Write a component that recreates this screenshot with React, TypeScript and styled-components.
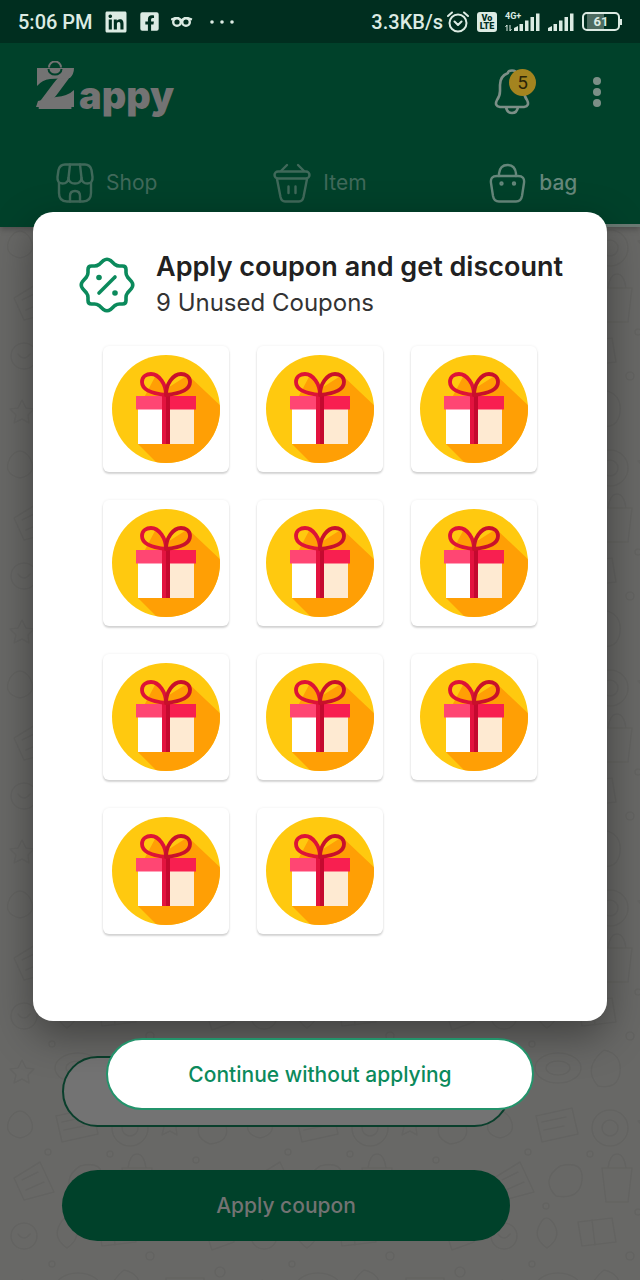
import React from 'react';
import styled, { createGlobalStyle, css } from 'styled-components';
import { FaLinkedin, FaFacebookSquare } from 'react-icons/fa';

const color = {
  green: '#0b8a5c',
  header: '#00412a',
  status: '#002e1f',
  statusInk: '#dcebe3',
  dimInk: '#737373',
  dimTab: '#40695a',
  dimTabActive: '#66877b',
  page: '#686866',
  ink: '#212121',
};

const uiFont = `Inter, 'Open Sans', sans-serif`;
const systemFont = `Roboto, 'Liberation Sans', sans-serif`;

const GlobalStyle = createGlobalStyle`
  *, *::before, *::after { box-sizing: border-box; }
  body { margin: 0; background: ${color.page}; font-family: ${uiFont}; }
  button, input { font: inherit; }
  svg { display: block; flex: none; }
`;

const Screen = styled.div`
  position: relative;
  min-height: 100vh;
  display: flex;
  flex-direction: column;
  background: ${color.page};
  overflow: hidden;
`;

/* Status bar */

const StatusBar = styled.div`
  display: flex;
  align-items: center;
  justify-content: space-between;
  height: 43px;
  padding: 0 20px 0 18px;
  background: ${color.status};
  color: ${color.statusInk};
  font: 500 20px/24px ${systemFont};
  white-space: nowrap;
`;

const StatusGroup = styled.div<{ $gap: number }>`
  display: flex;
  align-items: center;
  gap: ${(p) => p.$gap}px;
`;

const VolteBadge = styled.span`
  display: flex;
  flex-direction: column;
  align-items: center;
  justify-content: center;
  width: 20px;
  height: 20px;
  border-radius: 3px;
  background: ${color.statusInk};
  color: ${color.status};
  font: 900 9px/8px ${systemFont};
`;

const Signal = styled.span`
  position: relative;
  display: block;
`;

const NetworkTag = styled.span`
  position: absolute;
  left: 0;
  top: 0;
  font: 700 9px/8px ${systemFont};
`;

const Battery = styled.span`
  position: relative;
  display: flex;
  align-items: center;
  justify-content: center;
  width: 38px;
  height: 19px;
  border: 2px solid ${color.statusInk};
  border-radius: 5px;
  background: linear-gradient(90deg, transparent 3px, #4d6b60 3px, #4d6b60 20px, transparent 20px);
  font: 700 13px/15px ${systemFont};

  &::after {
    content: '';
    position: absolute;
    right: -4px;
    top: 5px;
    width: 2px;
    height: 6px;
    background: ${color.statusInk};
  }
`;

/* App header */

const Header = styled.header`
  position: relative;
  background: ${color.header};
  box-shadow: 0 2px 6px rgba(0, 0, 0, 0.25);
`;

const TopRow = styled.div`
  display: flex;
  align-items: center;
  justify-content: space-between;
  height: 98px;
  padding: 0 32px 0 36px;
`;

const Logo = styled.h1`
  position: relative;
  display: flex;
  align-items: baseline;
  margin: 0;
  color: ${color.dimInk};
  font-weight: 900;
  font-size: 38px;
  line-height: 60px;
`;

const LogoInitial = styled.span`
  width: 43px;
  font-size: 55px;
`;

const LogoBag = styled.svg`
  position: absolute;
  left: 0;
  top: 2px;
`;

const HeaderActions = styled.div`
  display: flex;
  align-items: center;
  gap: 48px;
`;

const IconButton = styled.button`
  position: relative;
  display: flex;
  padding: 0;
  border: 0;
  background: none;
`;

const Count = styled.span`
  position: absolute;
  right: -6px;
  top: 0;
  width: 27px;
  height: 27px;
  border-radius: 50%;
  background: #a4841f;
  color: #2b2408;
  font: 400 19px/27px ${systemFont};
  text-align: center;
`;

const Tabs = styled.nav`
  display: grid;
  grid-template-columns: repeat(3, 1fr);
`;

const Tab = styled.a<{ $active?: boolean }>`
  display: flex;
  align-items: center;
  justify-content: center;
  gap: 12px;
  height: 86px;
  border-bottom: 3px solid ${(p) => (p.$active ? '#6b7a74' : 'transparent')};
  color: ${(p) => (p.$active ? color.dimTabActive : color.dimTab)};
  font-size: 21px;
  font-weight: ${(p) => (p.$active ? 500 : 400)};
  line-height: 28px;
  text-decoration: none;
`;

/* Page behind the dialog */

const Doodles = styled.svg`
  position: absolute;
  inset: 0;
  width: 100%;
  height: 100%;
`;

const Main = styled.main`
  position: relative;
  flex: 1;
  display: flex;
  flex-direction: column;
  justify-content: flex-end;
  gap: 43px;
  padding: 829px 130px 39px 62px;
`;

const pill = css`
  display: block;
  border-radius: 36px;
  text-align: center;
  font-size: 21px;
  font-weight: 500;
  padding: 0;
`;

const CodeInput = styled.input`
  ${pill}
  width: 100%;
  height: 71px;
  border: 2px solid #0a3f2c;
  background: ${color.dimInk};
`;

const ApplyButton = styled.button`
  ${pill}
  width: 100%;
  height: 71px;
  border: 0;
  background: ${color.header};
  color: ${color.dimInk};
`;

/* Coupon dialog */

const Overlay = styled.div`
  position: absolute;
  inset: 0;
  padding: 212px 33px 0;
`;

const Dialog = styled.section`
  min-height: 809px;
  padding: 40px 38px 87px 46px;
  border-radius: 20px;
  background: #fff;
  box-shadow: 0 14px 40px rgba(0, 0, 0, 0.38);
`;

const DialogHead = styled.div`
  display: flex;
  align-items: center;
  gap: 21px;
  height: 66px;
`;

const Title = styled.h2`
  margin: 0;
  color: ${color.ink};
  font-size: 27px;
  font-weight: 600;
  line-height: 36px;
  white-space: nowrap;
`;

const Subtitle = styled.p`
  margin: 0;
  color: #333;
  font-size: 24px;
  line-height: 36px;
`;

const CouponGrid = styled.div`
  display: grid;
  grid-template-columns: repeat(auto-fill, 126px);
  gap: 28px;
  margin: 28px 24px 0;
`;

const CouponCard = styled.button`
  display: flex;
  align-items: center;
  justify-content: center;
  height: 126px;
  padding: 0;
  border: 0;
  border-radius: 6px;
  background: #fff;
  box-shadow: 0 2px 2px rgba(0, 0, 0, 0.16), 0 0 3px rgba(0, 0, 0, 0.07);
`;

const ContinueButton = styled.button`
  ${pill}
  width: calc(100% - 146px);
  height: 72px;
  margin: 17px auto 0;
  border: 2px solid #23936b;
  background: #fff;
  color: ${color.green};
`;

function Gift() {
  return (
    <svg width="108" height="108" viewBox="0 0 108 108" aria-hidden="true">
      <defs>
        <clipPath id="disc">
          <circle cx="54" cy="54" r="54" />
        </clipPath>
      </defs>
      <g clipPath="url(#disc)">
        <rect width="108" height="108" fill="#ffc90f" />
        <path d="M44 20 54 34 76 20 112 54V112H49L26 89V54Z" fill="#ff9f05" />
      </g>
      <path d="M26 54H54V89H26Z" fill="#fff" />
      <path d="M54 54H82V89H54Z" fill="#feead2" />
      <path d="M24 41H54V54.500H24Z" fill="#ff4673" />
      <path d="M54 41H84V54.500H54Z" fill="#f81f50" />
      <path d="M50 41H54V89H50Z" fill="#e3133f" />
      <path d="M54 41H58V89H54Z" fill="#c4092f" />
      <g fill="none" strokeWidth="3.800" strokeLinejoin="round">
        <path d="M54 40C44 39 30 36 30 27C30 21 35 19 39 19C47 19 54 29 54 40Z" stroke="#dd1237" />
        <path d="M54 40C64 39 78 36 78 27C78 21 73 19 69 19C61 19 54 29 54 40Z" stroke="#c8102b" />
      </g>
    </svg>
  );
}

function PercentBadge() {
  return (
    <svg width="56" height="56" viewBox="0 0 56 56" fill="none" stroke={color.green} strokeWidth="3.600" strokeLinecap="round" aria-hidden="true">
      <path d="M24.500 3.500Q28 1 31.500 3.500L36 7.500Q38 9 40.500 9H43.500Q47 9 47 12.500V15.500Q47 18 48.500 20L52.500 24.500Q55 28 52.500 31.500L48.500 36Q47 38 47 40.500V43.500Q47 47 43.500 47H40.500Q38 47 36 48.500L31.500 52.500Q28 55 24.500 52.500L20 48.500Q18 47 15.500 47H12.500Q9 47 9 43.500V40.500Q9 38 7.500 36L3.500 31.500Q1 28 3.500 24.500L7.500 20Q9 18 9 15.500V12.500Q9 9 12.500 9H15.500Q18 9 20 7.500Z" />
      <path d="M20 36 36 20" />
      <circle cx="20" cy="20.500" r="2.800" fill={color.green} stroke="none" />
      <circle cx="36" cy="36" r="2.800" fill={color.green} stroke="none" />
    </svg>
  );
}

const tabIcon = {
  width: 38,
  height: 40,
  viewBox: '0 0 38 40',
  fill: 'none',
  stroke: 'currentColor',
  strokeWidth: 2.4,
  strokeLinecap: 'round' as const,
  strokeLinejoin: 'round' as const,
  'aria-hidden': true,
};

function ShopIcon() {
  return (
    <svg {...tabIcon}>
      <path d="M9 1.500H29Q34 1.500 35.500 7L36.500 14Q37 20.500 31.500 20.500Q26 20.500 25.500 15Q25 20.500 19 20.500Q13 20.500 12.500 15Q12 20.500 6.500 20.500Q1 20.500 1.500 14L2.500 7Q4 1.500 9 1.500Z" />
      <path d="M14 1.500 12.500 15M24 1.500 25.500 15M3 20V30Q3 38.500 11 38.500H27Q35 38.500 35 30V20" />
      <path d="M14 38.500V33Q14 28 19 28Q24 28 24 33V38.500" />
    </svg>
  );
}

function BasketIcon() {
  return (
    <svg {...tabIcon}>
      <rect x="1.500" y="8.500" width="35" height="7" rx="3.500" />
      <path d="M14 2 8 8M25 2 31 8M4 16 7.500 34Q8.500 38.500 12 38.500H26Q29.500 38.500 30.500 34L34 16M15.500 23.500V30M22.500 23.500V30" />
    </svg>
  );
}

function BagIcon() {
  return (
    <svg {...tabIcon}>
      <path d="M10 13V10.500Q11 2 18.500 2Q26 2 27 10.500V13" />
      <path d="M8 13H29Q36 13 35 20L33 33Q32 38.500 27 38.500H10Q5 38.500 4 33L2 20Q1 13 8 13Z" />
      <circle cx="12.500" cy="20.500" r="1" />
      <circle cx="25" cy="20.500" r="1" />
    </svg>
  );
}

function Backdrop() {
  return (
    <Doodles aria-hidden="true">
      <defs>
        <pattern id="doodle" width="240" height="220" patternUnits="userSpaceOnUse">
          <g fill="none" stroke="#636361" strokeWidth="1.600" strokeLinejoin="round" strokeLinecap="round">
            <path d="M10 18q10-14 20 0q8 16-10 20q-18-4-10-20Z" />
            <path d="M56 16l36-8 6 26-36 8ZM62 22l24-5M64 30l20-4" />
            <circle cx="130" cy="28" r="18" />
            <circle cx="130" cy="28" r="8" />
            <path d="M170 12l4 8 8 1-6 6 1 8-7-4-8 4 2-8-6-6 8-1Z" />
            <path d="M204 18q18-8 22 8t-16 18q-20-8-6-26Z" />
            <path d="M14 78l26-16 14 30-30 8ZM22 80l16-8M26 90l18-8" />
            <path d="M80 66q24-6 22 14t-26 16q-16-16 4-30Z" />
            <path d="M122 68h30l-4 34h-22ZM128 68q2-14 9-14t9 14" />
            <path d="M178 72l34 10-6 22-34-10ZM184 80l22 6" />
            <circle cx="24" cy="136" r="13" />
            <path d="M18 134q6 8 12 0M60 124q6-12 14 0q8 14-7 24q-15-10-7-24Z" />
            <path d="M98 122l34-4 4 24-34 4ZM112 120l3 25" />
            <path d="M166 124a12 12 0 0 1 24 0v16h-24ZM204 126l22-8 8 24-22 8Z" />
            <path d="M22 180l4 8 8 1-6 6 1 8-7-4-8 4 2-8-6-6 8-1Z" />
            <ellipse cx="78" cy="188" rx="23" ry="15" />
            <ellipse cx="78" cy="188" rx="12" ry="7" />
            <path d="M124 170q18 4 16 22t-22 14q-16-18 6-36ZM166 178h38v24h-38ZM172 184h24" />
            <circle cx="48" cy="52" r="3" />
            <circle cx="110" cy="54" r="3" />
            <circle cx="196" cy="60" r="3" />
            <circle cx="66" cy="106" r="3" />
            <circle cx="158" cy="112" r="3" />
            <circle cx="150" cy="156" r="4" />
            <circle cx="52" cy="164" r="3" />
            <circle cx="220" cy="172" r="5" />
          </g>
        </pattern>
      </defs>
      <rect width="100%" height="100%" fill="url(#doodle)" />
    </Doodles>
  );
}

const coupons = Array.from({ length: 11 }, (_, i) => i + 1);

export default function App() {
  return (
    <Screen>
      <GlobalStyle />
      <Backdrop />
      <Header>
        <StatusBar>
          <StatusGroup $gap={11}>
            <span>5:06 PM</span>
            <FaLinkedin size={24} aria-label="LinkedIn" />
            <FaFacebookSquare size={21} aria-label="Facebook" />
            <svg width="64" height="20" viewBox="0 0 64 20" fill="none" stroke={color.statusInk} strokeWidth="2.400">
              <circle cx="6" cy="10" r="3.800" />
              <circle cx="15" cy="10" r="3.800" />
              <path d="M0 7.500 4 6H7L10.500 8 14 6H17L21 7.500" strokeWidth="2" />
              <g fill={color.statusInk} stroke="none">
                <circle cx="41" cy="10" r="1.800" />
                <circle cx="51" cy="10" r="1.800" />
                <circle cx="61" cy="10" r="1.800" />
              </g>
            </svg>
          </StatusGroup>
          <StatusGroup $gap={8}>
            <StatusGroup $gap={4}>
              <span>3.3KB/s</span>
              <svg width="22" height="22" viewBox="0 0 22 22" fill="none" stroke={color.statusInk} strokeWidth="2" strokeLinecap="round" strokeLinejoin="round">
                <circle cx="11" cy="12" r="8.500" />
                <path d="M7.500 10.500 11 14 14.500 10.500M1 5 5 1.500M21 5 17 1.500" />
              </svg>
            </StatusGroup>
            <VolteBadge>
              <span>Vo</span>
              <span>LTE</span>
            </VolteBadge>
            <Signal>
              <NetworkTag>4G+</NetworkTag>
              <svg width="35" height="20" viewBox="0 0 35 20">
                <path d="M2 19V13M.5 15 2 13M5 13V19M6.500 17 5 19" stroke={color.statusInk} fill="none" />
                <path d="M9 19v-3l4-2v5ZM14.500 19v-7h3.500v7ZM20 19V8.500h3.500V19ZM25.500 19V5H29v14ZM31 19V1.500h3.500V19Z" fill={color.statusInk} />
              </svg>
            </Signal>
            <svg width="26" height="20" viewBox="0 0 26 20">
              <path d="M0 19v-3l4-2v5ZM5.500 19v-7H9v7ZM11 19V8.500h3.500V19ZM16.500 19V5H20v14ZM22 19V1.500h3.500V19Z" fill={color.statusInk} />
            </svg>
            <Battery>61</Battery>
          </StatusGroup>
        </StatusBar>
        <TopRow>
          <Logo>
            <LogoBag width="39" height="46" viewBox="0 0 39 46" fill={color.dimInk} aria-hidden="true">
              <path d="M1 7H38Q38 13 34 17L14 18Q6 19 1 25Z" />
              <path d="M38 29V46H0L2 40 20 36Q32 35 38 29Z" />
            </LogoBag>
            <LogoInitial>Z</LogoInitial>appy
            <LogoBag width="39" height="18" viewBox="0 0 39 18" fill="none" aria-hidden="true">
              <path d="M13 6.500a6 6 0 0 1 12 0" stroke={color.dimInk} strokeWidth="2" />
              <path d="M12.500 8a6.500 5.500 0 0 0 13 0" stroke={color.header} strokeWidth="2" />
            </LogoBag>
          </Logo>
          <HeaderActions>
            <IconButton aria-label="Notifications">
              <svg width="36" height="46" viewBox="0 0 36 46" fill="none" stroke="#7c8f87" strokeWidth="2.600" strokeLinejoin="round">
                <path d="M14 4Q14 1.500 18 1.500Q22 1.500 22 4Q30 7 30 16V22Q30 27 33 31Q36 37 30 38H6Q0 37 3 31Q6 27 6 22V16Q6 7 14 4Z" />
                <path d="M12 38Q13 44 18 44Q23 44 24 38" />
              </svg>
              <Count>5</Count>
            </IconButton>
            <IconButton aria-label="More options">
              <svg width="30" height="30" viewBox="0 0 30 30" fill="#7c8f87">
                <circle cx="19" cy="4" r="4" />
                <circle cx="19" cy="15" r="4" />
                <circle cx="19" cy="26" r="4" />
              </svg>
            </IconButton>
          </HeaderActions>
        </TopRow>
        <Tabs>
          <Tab href="#shop">
            <ShopIcon />
            Shop
          </Tab>
          <Tab href="#item">
            <BasketIcon />
            Item
          </Tab>
          <Tab href="#bag" $active>
            <BagIcon />
            bag
          </Tab>
        </Tabs>
      </Header>
      <Main>
        <CodeInput aria-label="Coupon code" />
        <ApplyButton>Apply coupon</ApplyButton>
      </Main>
      <Overlay>
        <Dialog role="dialog" aria-labelledby="coupon-title">
          <DialogHead>
            <PercentBadge />
            <div>
              <Title id="coupon-title">Apply coupon and get discount</Title>
              <Subtitle>9 Unused Coupons</Subtitle>
            </div>
          </DialogHead>
          <CouponGrid>
            {coupons.map((n) => (
              <CouponCard key={n} aria-label={`Coupon ${n}`}>
                <Gift />
              </CouponCard>
            ))}
          </CouponGrid>
        </Dialog>
        <ContinueButton>Continue without applying</ContinueButton>
      </Overlay>
    </Screen>
  );
}
